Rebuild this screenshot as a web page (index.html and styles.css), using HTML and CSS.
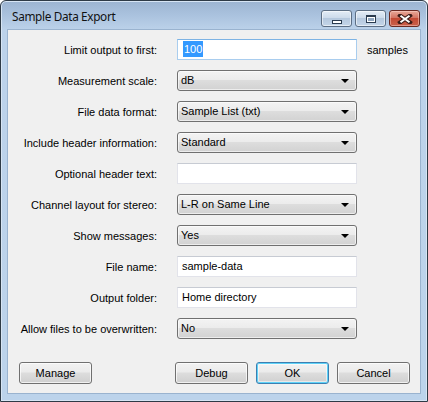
FILE: index.html
```html
<!DOCTYPE html>
<html>
<head>
<meta charset="utf-8">
<link rel="stylesheet" href="styles.css">
</head>
<body>
<div class="window">
  <div class="titlebar">
    <span class="title">Sample Data Export</span>
    <div class="caption">
      <div class="cbtn"><span class="g-min"></span></div>
      <div class="cbtn"><span class="g-max"></span></div>
      <div class="cbtn close">
        <svg width="16" height="10" viewBox="0 0 16 10">
          <path d="M3 1.5 L13 8.5 M13 1.5 L3 8.5" stroke="#3a1c18" stroke-width="4" stroke-linecap="square" fill="none"/>
          <path d="M3.5 1.8 L12.5 8.2 M12.5 1.8 L3.5 8.2" stroke="#ffffff" stroke-width="2" fill="none"/>
        </svg>
      </div>
    </div>
  </div>
  <div class="client">
    <div class="form">
      <div class="label">Limit output to first:</div>
      <div class="input focused"><span class="selected">100</span></div>
      <div class="unit">samples</div>

      <div class="label">Measurement scale:</div>
      <div class="select">dB<span class="arrow"></span></div>
      <div></div>

      <div class="label">File data format:</div>
      <div class="select">Sample List (txt)<span class="arrow"></span></div>
      <div></div>

      <div class="label">Include header information:</div>
      <div class="select">Standard<span class="arrow"></span></div>
      <div></div>

      <div class="label">Optional header text:</div>
      <div class="input"></div>
      <div></div>

      <div class="label">Channel layout for stereo:</div>
      <div class="select">L-R on Same Line<span class="arrow"></span></div>
      <div></div>

      <div class="label">Show messages:</div>
      <div class="select">Yes<span class="arrow"></span></div>
      <div></div>

      <div class="label">File name:</div>
      <div class="input">sample-data</div>
      <div></div>

      <div class="label">Output folder:</div>
      <div class="input">Home directory</div>
      <div></div>

      <div class="label">Allow files to be overwritten:</div>
      <div class="select">No<span class="arrow"></span></div>
      <div></div>
    </div>
    <div class="buttons">
      <div class="btn">Manage</div>
      <div class="spacer"></div>
      <div class="btn">Debug</div>
      <div class="btn default">OK</div>
      <div class="btn">Cancel</div>
    </div>
  </div>
</div>
</body>
</html>
```
FILE: styles.css
```css
html, body {
  margin: 0;
  padding: 0;
  background: #ffffff;
}
body {
  width: 428px;
  height: 402px;
  overflow: hidden;
}
.window {
  box-sizing: border-box;
  width: 428px;
  height: 402px;
  border: 1px solid #2e3a46;
  border-radius: 6px 6px 0 0;
  background: linear-gradient(to bottom, #9cb4d1 0px, #aac2de 14px, #bcd2ea 29px, #bcd3eb 100%);
  box-shadow: inset 0 0 0 1px #d7e5f4;
  display: flex;
  flex-direction: column;
}
.titlebar {
  height: 28px;
  display: flex;
  align-items: flex-start;
  position: relative;
}
.title {
  font-family: "Noto Sans", "Open Sans", sans-serif;
  font-size: 11.8px;
  color: #111;
  margin: 7px 0 0 11px;
  letter-spacing: -0.35px;
}
.caption {
  margin-left: auto;
  margin-right: 7px;
  margin-top: 9px;
  display: flex;
  gap: 3px;
}
.cbtn {
  box-sizing: border-box;
  width: 31px;
  height: 17px;
  border: 1px solid #5c6e84;
  border-radius: 3px;
  background: linear-gradient(to bottom, #e3ecf6 0%, #cddbeb 45%, #b5c8de 50%, #c4d5e8 100%);
  box-shadow: inset 0 0 0 1px rgba(255,255,255,0.55);
  display: flex;
  align-items: center;
  justify-content: center;
}
.cbtn.close {
  border-color: #6a2a22;
  background: linear-gradient(to bottom, #e8a999 0%, #d47563 45%, #c34a34 50%, #c9604b 100%);
  box-shadow: inset 0 0 0 1px rgba(255,220,210,0.45);
}
.g-min {
  box-sizing: border-box;
  width: 10px;
  height: 4px;
  background: #fff;
  border: 1px solid #2a3b4f;
  margin-top: 6px;
}
.g-max {
  box-sizing: border-box;
  width: 10px;
  height: 8px;
  border: 1px solid #2a3b4f;
  border-top-width: 2px;
  background: #fff;
  position: relative;
}
.g-max::after {
  content: "";
  position: absolute;
  left: 1px; top: 1px; right: 1px; bottom: 1px;
  background: #8fa6c0;
}
.client {
  margin: 0 6px 7px 6px;
  flex: 1;
  border: 1px solid #9ab3cf;
  background: #f0f0f0;
  display: flex;
  flex-direction: column;
  padding: 9px 0 9px 0;
  font-family: "Liberation Sans", Arial, sans-serif;
  font-size: 11px;
  color: #000;
}
.form {
  display: grid;
  grid-template-columns: 159px 180px auto;
  grid-auto-rows: 21px;
  column-gap: 10px;
  row-gap: 10px;
  align-items: center;
}
.label {
  text-align: right;
  padding-right: 10px;
  white-space: nowrap;
}
.unit {
  white-space: nowrap;
}
.input {
  box-sizing: border-box;
  height: 21px;
  background: #fff;
  border: 1px solid #e2e3ea;
  border-top-color: #c7cbd3;
  padding: 0 4px;
  line-height: 19px;
  white-space: nowrap;
}
.input.focused {
  border-color: #a9cdee;
  border-top-color: #7db3e4;
  padding-left: 5px;
}
.selected {
  background: #3399ff;
  color: #fff;
  padding: 2px 1px;
}
.select {
  box-sizing: border-box;
  height: 21px;
  border: 1px solid #707070;
  border-radius: 3px;
  background: linear-gradient(to bottom, #f3f3f3 0%, #ececec 45%, #dddddd 50%, #d2d2d2 100%);
  box-shadow: inset 0 0 0 1px rgba(255,255,255,0.6);
  padding: 0 3px;
  line-height: 19px;
  display: flex;
  align-items: center;
  white-space: nowrap;
}
.arrow {
  margin-left: auto;
  margin-right: 4px;
  width: 0;
  height: 0;
  border-left: 4px solid transparent;
  border-right: 4px solid transparent;
  border-top: 4px solid #000;
}
.buttons {
  margin-top: auto;
  display: flex;
  padding: 0 10px 0 11px;
  gap: 8px;
}
.spacer {
  flex: 1;
}
.btn {
  box-sizing: border-box;
  width: 73px;
  height: 22px;
  border: 1px solid #707070;
  border-radius: 3px;
  background: linear-gradient(to bottom, #f2f2f2 0%, #ebebeb 45%, #dddddd 50%, #cfcfcf 100%);
  box-shadow: inset 0 0 0 1px rgba(255,255,255,0.7);
  display: flex;
  align-items: center;
  justify-content: center;
}
.btn.default {
  border-color: #3c7fb1;
  box-shadow: inset 0 0 0 1px #5ed2f8, inset 0 0 0 2px rgba(255,255,255,0.5);
}
```
